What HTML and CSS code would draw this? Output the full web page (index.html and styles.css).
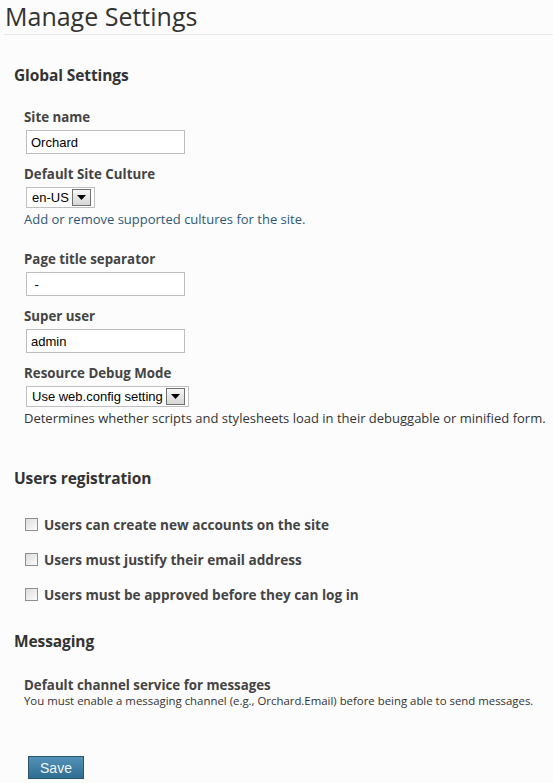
FILE: index.html
```html
<!DOCTYPE html>
<html>
<head>
<meta charset="utf-8">
<link rel="stylesheet" href="styles.css">
</head>
<body>
<h1 class="title">Manage Settings</h1>
<form class="settings">
  <section class="group">
    <h2 class="group-title">Global Settings</h2>
    <div class="fields">
      <div class="field">
        <label class="label">Site name</label>
        <input class="text" type="text" value="Orchard">
      </div>
      <div class="field">
        <label class="label">Default Site Culture</label>
        <div class="select"><span class="select-value">en-US</span><span class="select-btn"><svg width="9" height="5" viewBox="0 0 9 5"><path d="M0 0H9L4.5 5Z" fill="#000"/></svg></span></div>
        <p class="hint link">Add or remove supported cultures for the site.</p>
      </div>
      <div class="field spaced">
        <label class="label">Page title separator</label>
        <input class="text" type="text" value=" -">
      </div>
      <div class="field">
        <label class="label">Super user</label>
        <input class="text" type="text" value="admin">
      </div>
      <div class="field">
        <label class="label">Resource Debug Mode</label>
        <div class="select"><span class="select-value">Use web.config setting</span><span class="select-btn"><svg width="9" height="5" viewBox="0 0 9 5"><path d="M0 0H9L4.5 5Z" fill="#000"/></svg></span></div>
        <p class="hint">Determines whether scripts and stylesheets load in their debuggable or minified form.</p>
      </div>
    </div>
  </section>
  <section class="group">
    <h2 class="group-title">Users registration</h2>
    <div class="checks">
      <label class="check"><span class="box"></span>Users can create new accounts on the site</label>
      <label class="check"><span class="box"></span>Users must justify their email address</label>
      <label class="check"><span class="box"></span>Users must be approved before they can log in</label>
    </div>
  </section>
  <section class="group">
    <h2 class="group-title">Messaging</h2>
    <div class="fields msg">
      <label class="label">Default channel service for messages</label>
      <p class="small">You must enable a messaging channel (e.g., Orchard.Email) before being able to send messages.</p>
    </div>
  </section>
  <div class="actions"><button class="save" type="button">Save</button></div>
</form>
</body>
</html>
```
FILE: styles.css
```css
html, body { margin: 0; padding: 0; }
body {
  background: #fcfcfc;
  color: #333;
  font-family: "Open Sans", "Noto Sans", sans-serif;
  font-size: 13px;
  width: 553px;
  height: 783px;
  overflow: hidden;
}
.title {
  margin: 0 0 0 4px;
  padding: 0 0 0 1px;
  font-weight: normal;
  font-size: 25px;
  line-height: 32px;
  color: #333;
  border-bottom: 1px solid #e6e6e6;
  height: 35px;
  box-sizing: border-box;
}
.settings { padding: 0 0 0 14px; }
.group-title {
  margin: 0;
  font-size: 15.5px;
  font-weight: bold;
  color: #333;
  letter-spacing: -0.1px;
  line-height: 20px;
}
.group:first-child .group-title { padding-top: 30px; }
.fields { padding-left: 10px; }
.field { margin-top: 11px; }
.fields > .field:first-child { margin-top: 23px; }
.label {
  display: block;
  font-weight: bold;
  font-size: 13.3px;
  line-height: 18px;
  color: #444;
}
.text {
  display: block;
  margin: 4px 0 0 2px;
  width: 159px;
  height: 24px;
  box-sizing: border-box;
  border: 1px solid #bdbdbd;
  background: #fff;
  font-family: "Liberation Sans", Arial, sans-serif;
  font-size: 13px;
  padding: 0 4px;
  color: #000;
  outline: none;
}
.select {
  display: inline-flex;
  align-items: center;
  margin: 4px 0 0 2px;
  height: 21px;
  box-sizing: border-box;
  border: 1px solid #c0c0c0;
  background: #fff;
  padding: 0 3px 0 5px;
  font-family: "Liberation Sans", Arial, sans-serif;
  font-size: 13px;
  color: #000;
}
.select-value { padding-right: 3px; }
.select-btn {
  width: 19px;
  height: 17px;
  box-sizing: border-box;
  border: 1px solid #707070;
  background: linear-gradient(#f6f6f6, #d6d6d6);
  display: flex;
  align-items: center;
  justify-content: center;
}
.hint {
  margin: 2px 0 0 0;
  line-height: 18px;
  color: #333;
}
.hint.link { color: #2f5878; }
.fields > .spaced { margin-top: 22px; }
.group + .group { margin-top: 41px; }
.checks { padding: 27px 0 0 11px; display: flex; flex-direction: column; gap: 16px; }
.check {
  display: flex;
  align-items: center;
  font-weight: bold;
  font-size: 13.6px;
  line-height: 19px;
  color: #444;
}
.box {
  width: 13px;
  height: 13px;
  box-sizing: border-box;
  border: 1px solid #8f8f8f;
  background: linear-gradient(135deg, #dcdcdc, #fdfdfd);
  margin-right: 6px;
}
.group + .group + .group { margin-top: 27px; }
.msg { padding-top: 25px; }
.small {
  margin: 0;
  font-size: 11.4px;
  line-height: 14px;
  color: #333;
}
.actions { padding: 48px 0 0 14px; }
.save {
  display: block;
  width: 56px;
  height: 23px;
  border: 1px solid #2a5672;
  background: linear-gradient(#5592b8, #2f6d93);
  color: #eef4f8;
  font-family: "Liberation Sans", Arial, sans-serif;
  font-size: 14px;
  padding: 0;
}
```
